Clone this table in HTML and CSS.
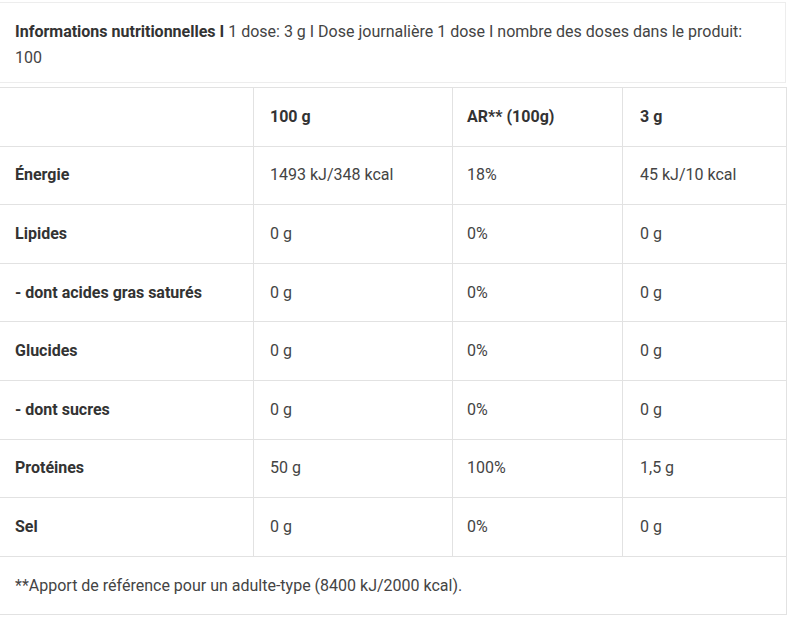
FILE: index.html
```html
<!DOCTYPE html>
<html lang="fr">
<head>
<meta charset="utf-8">
<link rel="stylesheet" href="styles.css">
</head>
<body>
<div class="wrap">
  <div class="caption"><strong>Informations nutritionnelles I</strong> 1 dose: 3 g I Dose journalière 1 dose I nombre des doses dans le produit: 100</div>
  <table class="nutri">
    <colgroup>
      <col class="c1"><col class="c2"><col class="c3"><col class="c4">
    </colgroup>
    <tr class="head"><th></th><th>100 g</th><th>AR** (100g)</th><th>3 g</th></tr>
    <tr><th>Énergie</th><td>1493 kJ/348 kcal</td><td>18%</td><td>45 kJ/10 kcal</td></tr>
    <tr><th>Lipides</th><td>0 g</td><td>0%</td><td>0 g</td></tr>
    <tr><th>- dont acides gras saturés</th><td>0 g</td><td>0%</td><td>0 g</td></tr>
    <tr><th>Glucides</th><td>0 g</td><td>0%</td><td>0 g</td></tr>
    <tr><th>- dont sucres</th><td>0 g</td><td>0%</td><td>0 g</td></tr>
    <tr><th>Protéines</th><td>50 g</td><td>100%</td><td>1,5 g</td></tr>
    <tr><th>Sel</th><td>0 g</td><td>0%</td><td>0 g</td></tr>
    <tr class="foot"><td colspan="4">**Apport de référence pour un adulte-type (8400 kJ/2000 kcal).</td></tr>
  </table>
</div>
</body>
</html>
```

FILE: styles.css
```css
html, body {
  margin: 0;
  padding: 0;
  background: #fff;
}
body {
  font-family: Roboto, "Liberation Sans", sans-serif;
  font-size: 16px;
  color: #444;
  overflow: hidden;
}
.wrap {
  padding-top: 2px;
  margin-left: -1px;
  width: 787px;
}
.caption {
  box-sizing: border-box;
  height: 81px;
  border: 1px solid #ededed;
  padding: 16px 30px 0 15px;
  line-height: 26px;
}
.caption strong {
  color: #333;
  font-weight: 700;
}
.nutri {
  margin-top: 4px;
  width: 787px;
  border-collapse: collapse;
  table-layout: fixed;
}
.c1 { width: 254px; }
.c2 { width: 199px; }
.c3 { width: 170px; }
.c4 { width: 164px; }
.nutri tr {
  height: 58.6px;
}
.nutri th, .nutri td {
  border: 1px solid #e2e2e2;
  padding: 0 16px;
  text-align: left;
  vertical-align: middle;
  line-height: 20px;
}
.nutri th {
  font-weight: 700;
  color: #333;
}
.nutri tr > th:first-child {
  padding-left: 15px;
}
.nutri tr > :nth-child(3) {
  padding-left: 14px;
}
.nutri tr > :nth-child(4) {
  padding-left: 17px;
}
.nutri .foot td {
  padding-left: 15px;
}
```
